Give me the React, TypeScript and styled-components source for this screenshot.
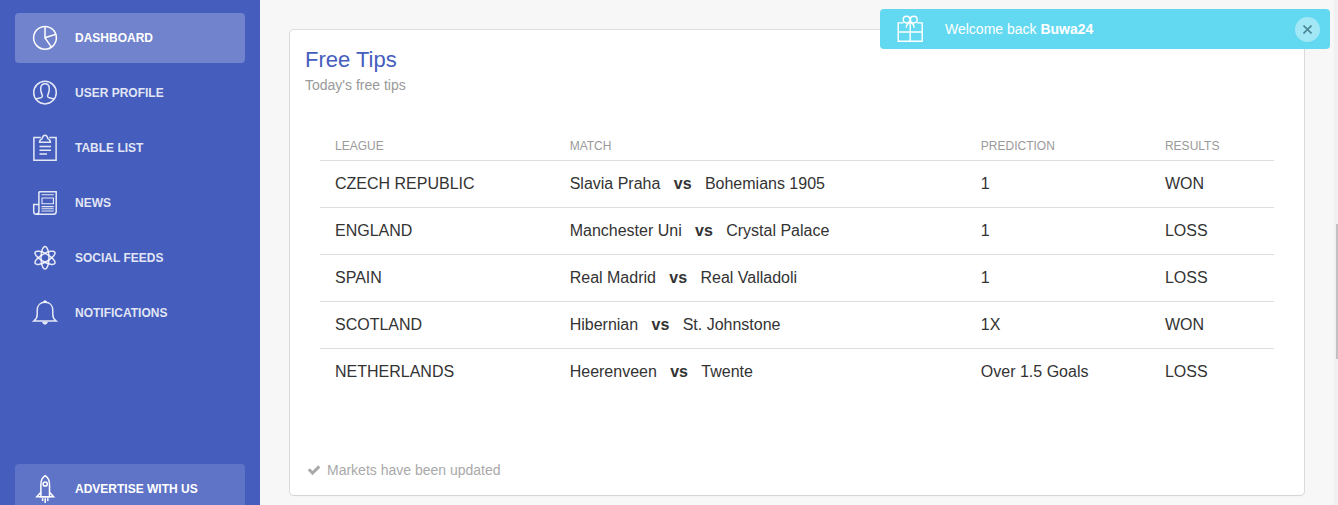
import React from "react";
import styled, { createGlobalStyle } from "styled-components";

const GlobalStyle = createGlobalStyle`
  * { box-sizing: border-box; }
  html, body { margin: 0; height: 100%; overflow: hidden; }
  body {
    background: #f7f7f7;
    color: #333;
    font-family: "Liberation Sans", Arial, Helvetica, sans-serif;
    font-size: 14px;
    line-height: 20px;
  }
`;

const Shell = styled.div`
  display: flex;
  height: 100vh;
  overflow: hidden;
`;

const Sidebar = styled.nav`
  flex: 0 0 260px;
  height: 100%;
  overflow: hidden;
  padding: 13px 15px;
  background: #455ebd;
`;

const NavList = styled.ul`
  display: flex;
  flex-direction: column;
  gap: 5px;
  height: 501px;
  margin: 0;
  padding: 0;
  list-style: none;
`;

const NavItem = styled.li<{ $last?: boolean }>`
  margin-top: ${(p) => (p.$last ? "auto" : "0")};
`;

const tints = {
  plain: "transparent",
  active: "rgba(255, 255, 255, 0.23)",
  promo: "rgba(255, 255, 255, 0.14)",
};

type Tone = keyof typeof tints;

const NavLink = styled.a<{ $tone: Tone }>`
  display: flex;
  align-items: center;
  gap: 15px;
  height: 50px;
  padding: 0 15px;
  border-radius: 4px;
  background: ${(p) => tints[p.$tone]};
  color: ${(p) => (p.$tone === "plain" ? "rgba(255, 255, 255, 0.86)" : "#fff")};
  font-size: 12px;
  font-weight: 700;
  text-decoration: none;
  text-transform: uppercase;
`;

const NavIcon = styled.svg`
  flex: none;
  width: 30px;
  height: 30px;
  fill: none;
  stroke: currentColor;
  stroke-width: 1.5;
`;

const Main = styled.main`
  flex: 1;
  min-width: 0;
  padding: 30px;
`;

const Card = styled.section`
  border-radius: 4px;
  background: #fff;
  box-shadow: 0 1px 2px rgba(0, 0, 0, 0.05), 0 0 0 1px rgba(63, 63, 68, 0.14);
`;

const CardHeader = styled.header`
  padding: 15px 15px 0;
`;

const Title = styled.h4`
  margin: 0;
  color: #455ebd;
  font-size: 22px;
  font-weight: 400;
  line-height: 30px;
`;

const Subtitle = styled.p`
  margin: 0;
  color: #9a9a9a;
`;

const TableWrap = styled.div`
  padding: 41px 30px 65px;
`;

const Table = styled.table`
  width: 100%;
  table-layout: fixed;
  border-collapse: separate;
  border-spacing: 0;
  text-align: left;
`;

const HeadCell = styled.th<{ $width: string }>`
  width: ${(p) => p.$width};
  padding: 0 15px 4px;
  color: #9a9a9a;
  font-size: 12px;
  font-weight: 400;
  text-transform: uppercase;
`;

const Cell = styled.td`
  padding: 12px 15px;
  border-top: 1px solid #ddd;
  font-size: 16px;
  line-height: 22px;
`;

const CardFooter = styled.footer`
  display: flex;
  align-items: center;
  gap: 6px;
  padding: 0 17px 15px;
  color: #a9a9a9;
`;

const CheckIcon = styled.svg`
  width: 14px;
  height: 14px;
  fill: currentColor;
`;

const ScrollTrack = styled.div`
  flex: 0 0 4px;
  padding: 224px 0 0 2px;
  background: #f0f0f0;
`;

const ScrollThumb = styled.div`
  height: 135px;
  background: #c1c1c1;
`;

const Toast = styled.div`
  position: fixed;
  top: 9px;
  right: 8px;
  display: flex;
  align-items: center;
  width: 450px;
  height: 40px;
  padding: 0 10px 0 17px;
  border-radius: 4px;
  background: #63d8f1;
  color: #fff;
`;

const GiftIcon = styled.svg`
  width: 28px;
  height: 28px;
  fill: none;
  stroke: currentColor;
  stroke-width: 1.4;
`;

const ToastText = styled.span`
  flex: 1;
  padding-left: 20px;
`;

const CloseButton = styled.button`
  display: grid;
  place-items: center;
  width: 25px;
  height: 25px;
  padding: 0;
  border: 0;
  border-radius: 50%;
  background: rgba(255, 255, 255, 0.4);
  color: #4b8794;
`;

const CloseIcon = styled.svg`
  width: 9px;
  height: 9px;
  stroke: currentColor;
  stroke-width: 1.6;
`;

const icons = {
  graph: (
    <>
      <circle cx="15" cy="14.8" r="11.4" />
      <path d="M15 3.4V14.8L26 11.2M15 14.8L21.4 24.2" />
    </>
  ),
  user: (
    <>
      <circle cx="15" cy="14.6" r="11.3" />
      <path d="M5.8 21.2C8 20 12 20.2 12.4 18.4C12.7 16.8 10.7 15.6 10.7 10.8C10.7 7.4 12.3 5.8 15 5.8S19.3 7.4 19.3 10.8C19.3 15.6 17.3 16.8 17.6 18.4C18 20.2 22 20 24.2 21.2" />
    </>
  ),
  note: (
    <>
      <path d="M10.8 4.5H3.9V27.3H26.1V4.5H19.2" />
      <path d="M9.6 9.2C9.6 6.8 10.8 6.3 11.9 5.9C12.7 5.5 12.2 2.2 15 2.2S17.3 5.5 18.1 5.9C19.2 6.3 20.4 6.8 20.4 9.2Z" />
      <path d="M9.5 13.5H21M9.5 17.3H21M9.5 21H17" />
    </>
  ),
  news: (
    <>
      <path d="M8.9 3.7H26.2V23.5C26.2 25.3 25.3 26.3 23.5 26.3H6.3C4.5 26.3 3.7 25.3 3.7 23.5V16.6H8.9" />
      <path d="M8.9 3.7V23.5C8.9 25.3 8 26.3 6.3 26.3" />
      <path d="M11.5 6.8H23.8M12 10H23.4V15.7H12ZM11.5 18.6H23.8M11.5 20.8H23.8M11.5 23H23.8" strokeWidth="1.1" />
    </>
  ),
  science: (
    <>
      <ellipse cx="15" cy="14.8" rx="4" ry="11.3" />
      <ellipse cx="15" cy="14.8" rx="4" ry="11.3" transform="rotate(60 15 14.8)" />
      <ellipse cx="15" cy="14.8" rx="4" ry="11.3" transform="rotate(-60 15 14.8)" />
    </>
  ),
  bell: (
    <>
      <path d="M4 22.9C6.3 21.2 7.2 19.5 7.2 16.5V12.2C7.2 7.4 10.4 4.3 15 4.3S22.8 7.4 22.8 12.2V16.5C22.8 19.5 23.7 21.2 26 22.9Z" />
      <path d="M13.4 4.2C13.4 2.2 16.6 2.2 16.6 4.2ZM12.6 24.2C12.9 26.8 17.1 26.8 17.4 24.2Z" fill="currentColor" strokeWidth="0.8" />
    </>
  ),
  rocket: (
    <>
      <path d="M15.2 1.6C12.3 3.5 10.9 6.7 10.9 10.3V22.8H19.5V10.3C19.5 6.7 18.1 3.5 15.2 1.6Z" />
      <path d="M10.9 18.3L6.8 22.8H23.6L19.5 18.3" />
      <circle cx="15.2" cy="10" r="2.1" />
      <path d="M12.6 24.3V27M15.2 24.3V29M17.8 24.3V27" />
    </>
  ),
};

interface NavEntry {
  label: string;
  icon: keyof typeof icons;
  tone?: Tone;
}

const navEntries: NavEntry[] = [
  { label: "Dashboard", icon: "graph", tone: "active" },
  { label: "User Profile", icon: "user" },
  { label: "Table List", icon: "note" },
  { label: "News", icon: "news" },
  { label: "Social Feeds", icon: "science" },
  { label: "Notifications", icon: "bell" },
  { label: "Advertise with us", icon: "rocket", tone: "promo" },
];

const columns = [
  { label: "League", width: "24.6%" },
  { label: "Match", width: "43.1%" },
  { label: "Prediction", width: "19.3%" },
  { label: "Results", width: "13%" },
];

const tips = [
  { league: "CZECH REPUBLIC", home: "Slavia Praha", away: "Bohemians 1905", prediction: "1", result: "WON" },
  { league: "ENGLAND", home: "Manchester Uni", away: "Crystal Palace", prediction: "1", result: "LOSS" },
  { league: "SPAIN", home: "Real Madrid", away: "Real Valladoli", prediction: "1", result: "LOSS" },
  { league: "SCOTLAND", home: "Hibernian", away: "St. Johnstone", prediction: "1X", result: "WON" },
  { league: "NETHERLANDS", home: "Heerenveen", away: "Twente", prediction: "Over 1.5 Goals", result: "LOSS" },
];

export default function App() {
  return (
    <>
      <GlobalStyle />
      <Shell>
        <Sidebar>
          <NavList>
            {navEntries.map(({ label, icon, tone = "plain" }) => (
              <NavItem key={label} $last={tone === "promo"}>
                <NavLink href="#" $tone={tone}>
                  <NavIcon viewBox="0 0 30 30" aria-hidden="true">{icons[icon]}</NavIcon>
                  {label}
                </NavLink>
              </NavItem>
            ))}
          </NavList>
        </Sidebar>
        <Main>
          <Card>
            <CardHeader>
              <Title>Free Tips</Title>
              <Subtitle>Today's free tips</Subtitle>
            </CardHeader>
            <TableWrap>
              <Table>
                <thead>
                  <tr>
                    {columns.map((c) => (
                      <HeadCell key={c.label} $width={c.width} scope="col">{c.label}</HeadCell>
                    ))}
                  </tr>
                </thead>
                <tbody>
                  {tips.map((t) => (
                    <tr key={t.league}>
                      <Cell>{t.league}</Cell>
                      <Cell>
                        {t.home}&nbsp;&nbsp; <strong>vs</strong> &nbsp;&nbsp;{t.away}
                      </Cell>
                      <Cell>{t.prediction}</Cell>
                      <Cell>{t.result}</Cell>
                    </tr>
                  ))}
                </tbody>
              </Table>
            </TableWrap>
            <CardFooter>
              <CheckIcon viewBox="0 0 1792 1792" aria-hidden="true">
                <path d="M1671 566q0 40-28 68l-724 724-136 136q-28 28-68 28t-68-28l-136-136-362-362q-28-28-28-68t28-68l136-136q28-28 68-28t68 28l294 295 656-657q28-28 68-28t68 28l136 136q28 28 28 68z" />
              </CheckIcon>
              Markets have been updated
            </CardFooter>
          </Card>
        </Main>
        <ScrollTrack>
          <ScrollThumb />
        </ScrollTrack>
      </Shell>
      <Toast role="status">
        <GiftIcon viewBox="0 0 28 28" aria-hidden="true">
          <path d="M6.5 7.9H1.2V26.2H25.2V7.9H20M1.2 17H25.2M13.2 7.5V26.2" />
          <path d="M9.2 12.8C9.4 10 11 8 13.2 7C15.4 8 17 10 17.2 12.8" />
          <circle cx="9.6" cy="4.6" r="3.4" />
          <circle cx="16.8" cy="4.6" r="3.4" />
        </GiftIcon>
        <ToastText>
          Welcome back <b>Buwa24</b>
        </ToastText>
        <CloseButton type="button" aria-label="Close">
          <CloseIcon viewBox="0 0 9 9" aria-hidden="true">
            <path d="M0.5 0.5L8.5 8.5M8.5 0.5L0.5 8.5" />
          </CloseIcon>
        </CloseButton>
      </Toast>
    </>
  );
}
